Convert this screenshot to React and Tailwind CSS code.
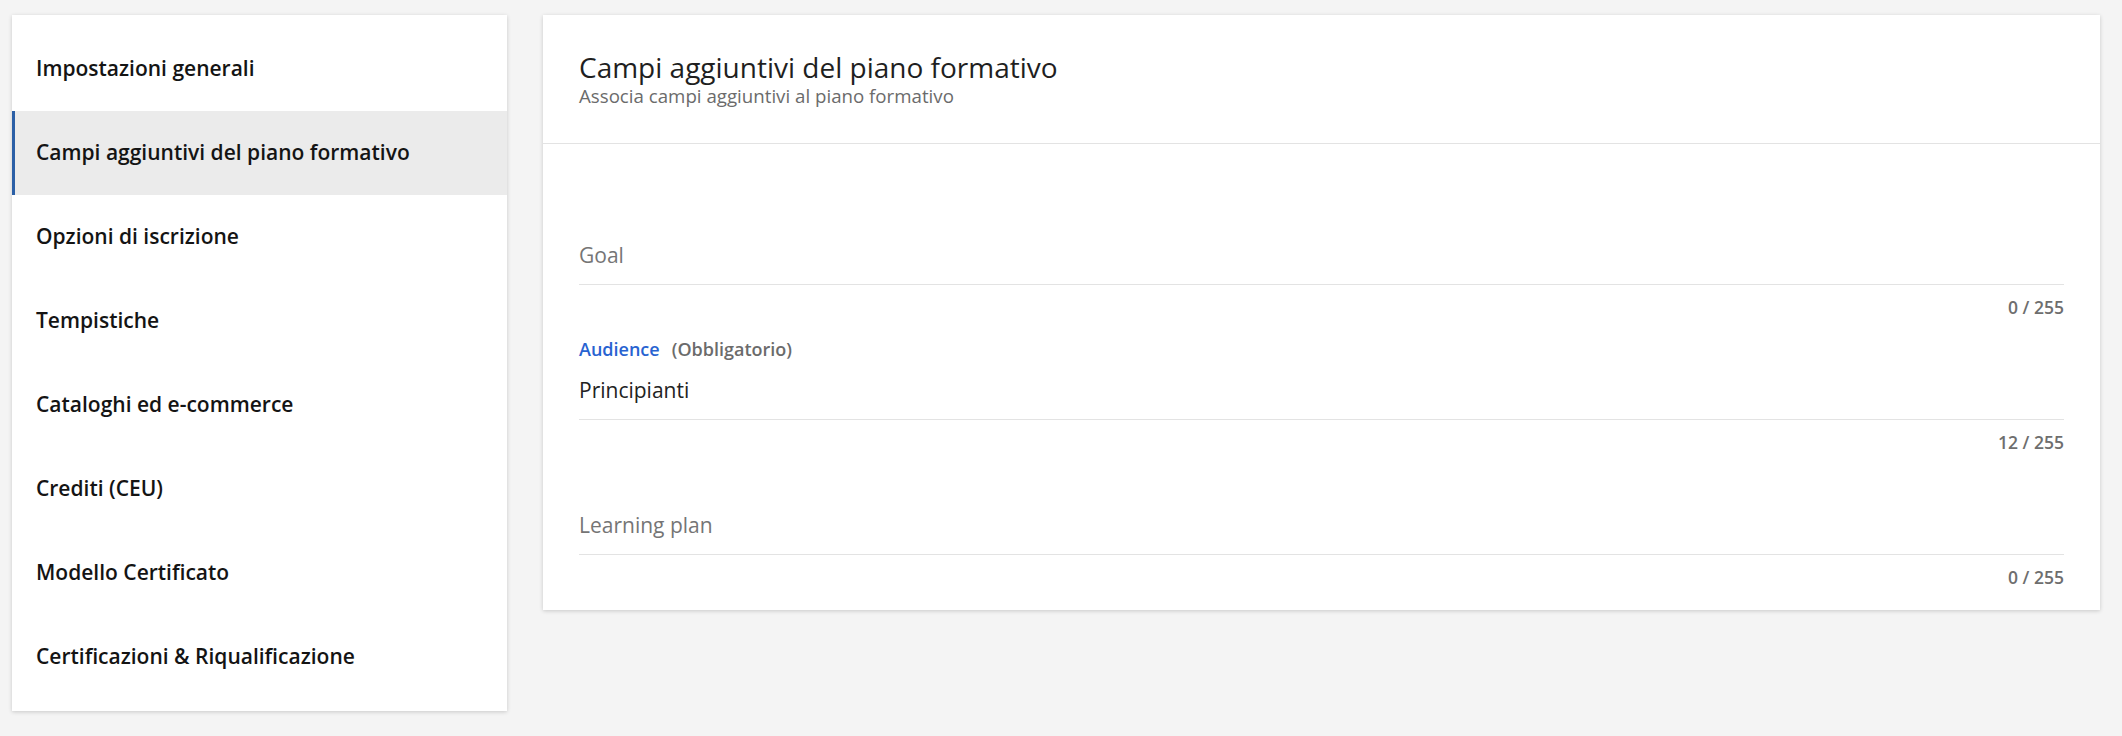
import React from "react";

const items = [
  "Impostazioni generali",
  "Campi aggiuntivi del piano formativo",
  "Opzioni di iscrizione",
  "Tempistiche",
  "Cataloghi ed e-commerce",
  "Crediti (CEU)",
  "Modello Certificato",
  "Certificazioni & Riqualificazione",
];

function Field({ label, required, value, placeholder, count }) {
  return (
    <div className="flex flex-col">
      <div className="h-[24px] leading-[24px] text-[18px] font-semibold flex items-center">
        {label && (
          <>
            <span className="text-[#2863d1]">{label}</span>
            {required && <span className="ml-[12px] text-[#6b6b6b]">{required}</span>}
          </>
        )}
      </div>
      <div className="mt-[11px] h-[36px] leading-[36px] text-[21px]">
        {value ? (
          <span className="text-[#222222]">{value}</span>
        ) : (
          <span className="text-[#757575]">{placeholder}</span>
        )}
      </div>
      <div className="mt-[11px] h-px bg-[#e3e3e3]" />
      <div className="mt-[10px] h-[24px] leading-[24px] text-[17.5px] font-semibold text-[#6e6e6e] text-right">
        {count}
      </div>
    </div>
  );
}

export default function App() {
  return (
    <div
      className="min-h-[736px] w-full bg-[#f4f4f4] flex items-start gap-[36px] pl-[12px] pr-[22px] pt-[15px]"
      style={{ fontFamily: '"Open Sans", "Noto Sans", sans-serif' }}
    >
      <div className="w-[495px] shrink-0 bg-white shadow-[0_1px_4px_rgba(0,0,0,0.18)] py-[12px]">
        {items.map((t, i) => (
          <div
            key={t}
            className={
              i === 1
                ? "h-[84px] flex items-center pl-[21px] border-l-[3px] border-[#2b5fa6] bg-[#ebebeb] text-[21px] font-semibold text-[#141414]"
                : "h-[84px] flex items-center pl-[21px] border-l-[3px] border-transparent text-[21px] font-semibold text-[#141414]"
            }
          >
            {t}
          </div>
        ))}
      </div>
      <div className="flex-1 bg-white shadow-[0_1px_4px_rgba(0,0,0,0.18)]">
        <div className="px-[36px] pt-[35px] h-[129px] border-b border-[#e3e3e3]">
          <div className="text-[28px] leading-[34px] text-[#1f1f1f]">
            Campi aggiuntivi del piano formativo
          </div>
          <div className="text-[18.7px] leading-[24px] text-[#6b6b6b]">
            Associa campi aggiuntivi al piano formativo
          </div>
        </div>
        <div className="px-[36px] pt-[58px] pb-[21px] flex flex-col gap-[18px]">
          <Field placeholder="Goal" count="0 / 255" />
          <Field label="Audience" required="(Obbligatorio)" value="Principianti" count="12 / 255" />
          <Field placeholder="Learning plan" count="0 / 255" />
        </div>
      </div>
    </div>
  );
}
